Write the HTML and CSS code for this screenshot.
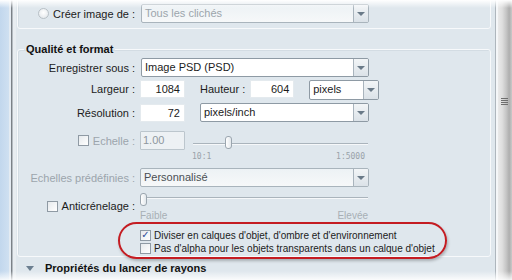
FILE: index.html
```html
<!DOCTYPE html>
<html lang="fr">
<head>
<meta charset="utf-8">
<title>Qualité et format</title>
<link rel="stylesheet" href="styles.css">
</head>
<body>
<div class="screen">
  <div class="edge-left">
    <div class="edge-blue"></div>
    <div class="edge-gap"></div>
    <div class="edge-dark"></div>
    <div class="edge-mid"></div>
    <div class="edge-light"></div>
  </div>

  <div class="panel">
    <div class="group group-top">
      <div class="row">
        <div class="lbl"><span class="radio"></span><span>Créer image de :</span></div>
        <div class="select select-disabled w228 ctl-top"><span class="val muted">Tous les clichés</span><span class="arrow"></span></div>
      </div>
    </div>

    <fieldset class="group group-main">
      <legend>Qualité et format</legend>

      <div class="row row-save">
        <div class="lbl">Enregistrer sous :</div>
        <div class="select w228 ctl-top"><span class="val">Image PSD (PSD)</span><span class="arrow"></span></div>
      </div>

      <div class="row row-size">
        <div class="lbl">Largeur :</div>
        <div class="field num ctl">1084</div>
        <div class="lbl2">Hauteur :</div>
        <div class="field num num-h">604</div>
        <div class="select w69 sel-unit"><span class="val">pixels</span><span class="arrow"></span></div>
      </div>

      <div class="row row-res">
        <div class="lbl">Résolution :</div>
        <div class="field num ctl">72</div>
        <div class="select w169 sel-res"><span class="val">pixels/inch</span><span class="arrow"></span></div>
      </div>

      <div class="row row-scale">
        <div class="lbl muted"><span class="check"></span><span>Echelle :</span></div>
        <div class="field field-disabled ctl">1.00</div>
        <div class="slider slider-scale"><span class="track"></span><span class="thumb" style="left:35px"></span></div>
      </div>
      <div class="ticks ticks-scale"><span>10:1</span><span>1:5000</span></div>

      <div class="row row-preset">
        <div class="lbl muted">Echelles prédéfinies :</div>
        <div class="select select-disabled w229 ctl"><span class="val dim">Personnalisé</span><span class="arrow"></span></div>
      </div>

      <div class="row row-aa">
        <div class="lbl lbl-aa"><span class="check"></span><span>Anticrénelage :</span></div>
        <div class="slider slider-aa"><span class="track"></span><span class="thumb" style="left:0px"></span></div>
      </div>
      <div class="ticks ticks-aa"><span>Faible</span><span>Elevée</span></div>

      <div class="opt opt-first"><span class="check checked">✓</span><span>Diviser en calques d'objet, d'ombre et d'environnement</span></div>
      <div class="opt"><span class="check"></span><span>Pas d'alpha pour les objets transparents dans un calque d'objet</span></div>
    </fieldset>

    <div class="section-toggle"><span class="tri"></span><span>Propriétés du lancer de rayons</span></div>
  </div>

  <div class="scroll-area">
    <div class="sc-line"></div>
    <div class="sc-white"></div>
    <div class="scrollbar"><div class="grip"><i></i><i></i><i></i><i></i></div></div>
  </div>

  <div class="highlight"></div>
  <div class="fade-top"></div>
  <div class="fade-bottom"></div>
</div>
</body>
</html>
```

FILE: styles.css
```css
* { box-sizing: border-box; }

html, body {
  margin: 0;
  padding: 0;
}

body {
  width: 512px;
  height: 280px;
  overflow: hidden;
  background: #ffffff;
  font-family: "Liberation Sans", Arial, sans-serif;
  font-size: 11px;
  color: #1b1b1b;
}

.screen {
  position: relative;
  display: flex;
  width: 512px;
  height: 280px;
  overflow: hidden;
  background: #dfe7ed;
}

/* left window edge */
.edge-left {
  display: flex;
  width: 16px;
  flex: none;
}
.edge-blue { width: 9px; background: linear-gradient(90deg, #c2d7ed, #cfe0f1); }
.edge-gap { width: 2px; background: #e4ebf2; }
.edge-dark { width: 1px; background: #7b8187; }
.edge-mid { width: 1px; background: #b4bbc1; }
.edge-light { width: 3px; background: #e8edf1; }

/* main panel */
.panel {
  width: 479px;
  flex: none;
  padding-left: 1px;
  padding-right: 4px;
}

.group {
  border: 1px solid #f7f9fb;
  border-radius: 3px;
  box-shadow: inset 1px 1px 0 #d3dce3;
}

.group-top {
  margin-top: -12px;
  height: 41px;
  padding-top: 15px;
}

.group-main {
  margin: 13px 0 0 0;
  padding: 0;
  height: 215px;
  min-width: 0;
}

.group-main legend {
  margin-left: 6px;
  padding: 0 2px;
  font-weight: bold;
  font-size: 11px;
  line-height: 14px;
  color: #111;
}

.row {
  display: flex;
  align-items: center;
  height: 19px;
}

.lbl {
  width: 117px;
  flex: none;
  display: flex;
  justify-content: flex-end;
  align-items: center;
  gap: 4px;
  white-space: nowrap;
}

.muted { color: #9ca5ac; }
.dim { color: #4a4f54; }

.ctl { margin-left: 5px; }
.ctl-top { margin-left: 6px; }

.row-save { margin-top: 2px; }
.row-size { margin-top: 3px; align-items: flex-start; height: 20px; }
.row-size .lbl, .row-size .lbl2 { height: 18px; }
.row-res { margin-top: 3px; }
.row-scale { margin-top: 9px; }
.row-preset { margin-top: 6px; }
.row-aa { margin-top: 6px; align-items: flex-start; height: 19px; }
.lbl-aa { height: 19px; align-items: flex-end; gap: 4px; }

.lbl2 {
  display: flex;
  align-items: center;
  margin-left: 15px;
  white-space: nowrap;
}

/* text fields */
.field {
  height: 18px;
  width: 45px;
  background: #ffffff;
  border: 1px solid #e4eaee;
  border-radius: 1px;
  line-height: 16px;
  padding: 0 4px;
  flex: none;
}
.num { text-align: right; }
.num-h { margin-left: 5px; width: 44px; }
.field-disabled {
  background: #edf1f4;
  border-color: #bcc6cd;
  color: #8e979e;
  text-align: left;
  height: 19px;
  padding-left: 2px;
}

/* selects */
.select {
  display: flex;
  height: 19px;
  background: #ffffff;
  border: 1px solid #8e9aa4;
  border-radius: 2px;
  flex: none;
  overflow: hidden;
}
.select .val {
  flex: 1;
  padding-left: 3px;
  line-height: 17px;
  white-space: nowrap;
}
.select .arrow {
  width: 15px;
  flex: none;
  border-left: 1px solid #a9b4bd;
  background: linear-gradient(#f2f5f7, #dbe2e8);
  display: flex;
  align-items: center;
  justify-content: center;
}
.select .arrow::after {
  content: "";
  width: 0;
  height: 0;
  border-left: 4px solid transparent;
  border-right: 4px solid transparent;
  border-top: 4px solid #6a7a88;
}
.select-disabled {
  background: linear-gradient(#edf2f5, #f6f8f9);
  border-color: #a9b4bc;
}
.w228 { width: 228px; }
.w229 { width: 229px; }
.w69 { width: 70px; }
.w169 { width: 169px; }
.sel-unit { margin-left: 15px; height: 20px; }
.sel-res { margin-left: 15px; }

/* radio & checkbox */
.radio {
  width: 11px;
  height: 11px;
  border-radius: 50%;
  border: 1px solid #b8c0c6;
  background: radial-gradient(circle at 50% 40%, #ffffff, #dfe4e8);
  flex: none;
}
.check {
  width: 11px;
  height: 11px;
  border: 1px solid #8f9aa4;
  background: linear-gradient(135deg, #e6eaed, #ffffff);
  flex: none;
  display: inline-flex;
  align-items: center;
  justify-content: center;
  font-size: 10px;
  line-height: 1;
  font-family: "DejaVu Sans", sans-serif;
  color: #2a4b98;
  font-weight: bold;
}

/* sliders */
.slider {
  position: relative;
  flex: none;
}
.slider .track {
  position: absolute;
  left: 3px;
  right: 0;
  height: 2px;
  border-top: 1px solid #aab4bc;
  border-bottom: 1px solid #f6f8fa;
}
.slider .thumb {
  position: absolute;
  top: 0;
  width: 7px;
  height: 13px;
  border: 1px solid #9ba6af;
  border-radius: 3px;
  background: linear-gradient(90deg, #ffffff, #e3e8ec);
}
.slider-scale {
  margin-left: 5px;
  width: 178px;
  height: 19px;
}
.slider-scale .track { top: 12px; }
.slider-scale .thumb { top: 5px; }
.slider-aa {
  margin-left: 5px;
  width: 228px;
  height: 14px;
}
.slider-aa .track { top: 4px; }

.ticks {
  display: flex;
  justify-content: space-between;
  color: #99a2a9;
  white-space: nowrap;
}
.ticks-scale {
  margin-left: 174px;
  width: 173px;
  height: 10px;
  margin-top: 2px;
  font-size: 8px;
  line-height: 10px;
  font-family: "DejaVu Sans Mono", monospace;
}
.ticks-aa {
  margin-left: 122px;
  width: 228px;
  height: 10px;
  margin-top: -1px;
  font-size: 10px;
  line-height: 10px;
  color: #a7afb5;
}

.opt {
  display: flex;
  align-items: center;
  gap: 3px;
  margin-left: 122px;
  height: 12px;
  margin-top: 1px;
  white-space: nowrap;
  font-size: 10px;
}
.opt-first { margin-top: 8px; }

/* section toggle */
.section-toggle {
  display: flex;
  align-items: center;
  margin-top: 5px;
  margin-left: 9px;
  height: 12px;
  font-weight: bold;
  color: #111;
}
.section-toggle .tri {
  width: 0;
  height: 0;
  border-left: 4.5px solid transparent;
  border-right: 4.5px solid transparent;
  border-top: 5px solid #6c7f90;
  margin-right: 11px;
}

/* scroll area */
.scroll-area {
  display: flex;
  flex: 1;
}
.sc-line { width: 1px; background: #aeb6bd; }
.sc-white { width: 2px; background: #f4f6f8; }
.scrollbar {
  flex: 1;
  background: linear-gradient(90deg, #e9e9e9 0%, #dedede 30%, #c4c4c4 60%, #aeaeae 80%, #c9c9c9 100%);
  padding-top: 98px;
  padding-left: 3px;
}
.grip {
  display: flex;
  flex-direction: column;
  gap: 1px;
  width: 7px;
}
.grip i {
  display: block;
  height: 1px;
  background: #6e6e6e;
}

/* annotation */
.highlight {
  position: absolute;
  left: 118px;
  top: 222px;
  width: 329px;
  height: 37px;
  border: 2px solid #c41c22;
  border-radius: 19px;
  box-shadow: 1px 2px 3px rgba(0, 0, 0, 0.25);
  pointer-events: none;
}

.fade-top {
  position: absolute;
  left: 0;
  top: 0;
  width: 100%;
  height: 8px;
  background: linear-gradient(#ffffff, rgba(255, 255, 255, 0));
}
.fade-bottom {
  position: absolute;
  left: 0;
  bottom: 0;
  width: 100%;
  height: 9px;
  background: linear-gradient(rgba(255, 255, 255, 0), rgba(255, 255, 255, 0.85));
}
```
